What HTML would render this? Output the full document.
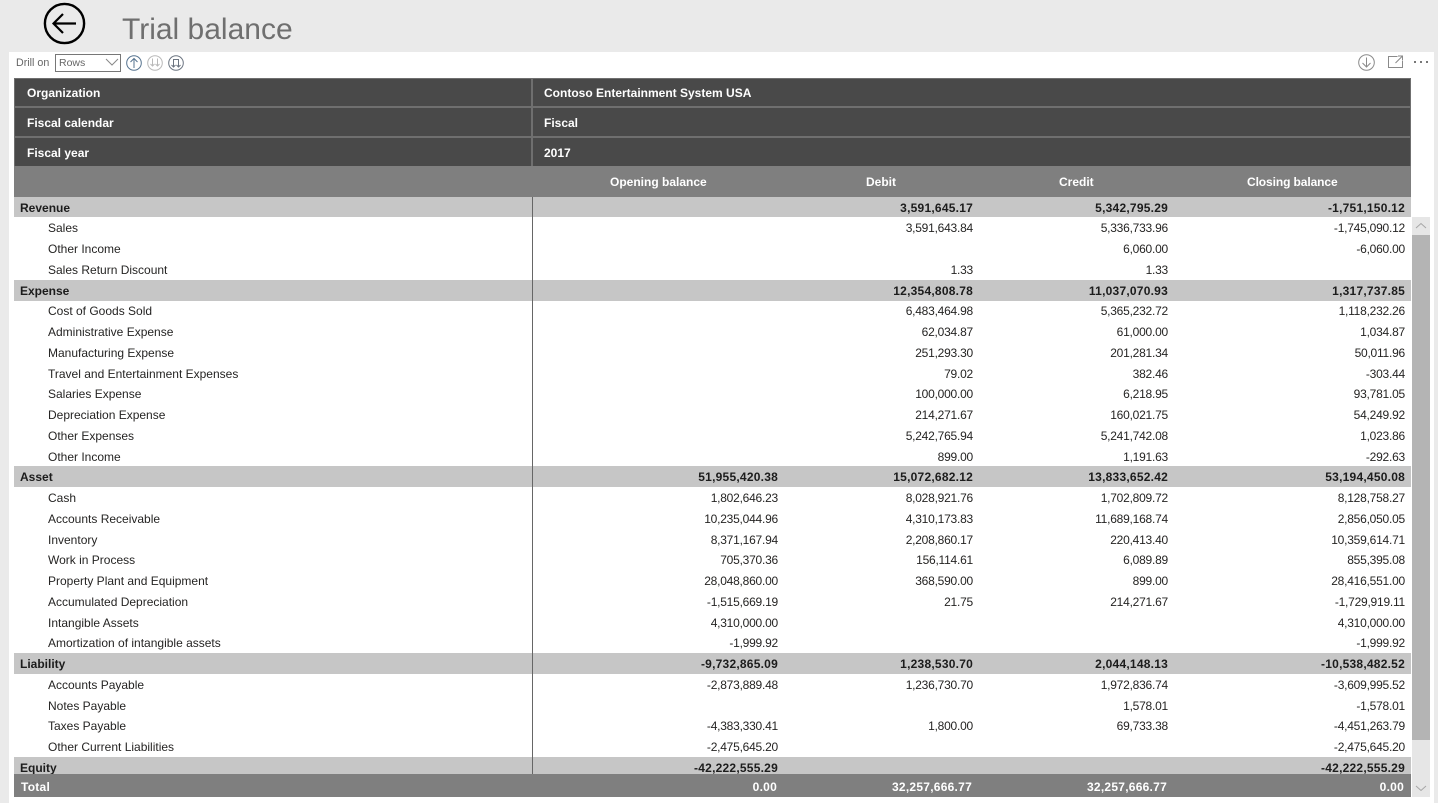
<!DOCTYPE html>
<html><head><meta charset="utf-8"><title>Trial balance</title>
<style>
html,body{margin:0;padding:0;width:1438px;height:803px;overflow:hidden;background:#eaeaea;font-family:"Liberation Sans",Arial,sans-serif}
div,span,svg{position:absolute;display:block}
.t{white-space:nowrap}
#panel{left:9px;top:52px;width:1425px;height:751px;background:#fff}
.h{left:14px;width:1395px;height:28px;background:#494949;border:0 solid #6f6f6f;border-width:2px 1px 0;color:#fff;font-weight:bold;font-size:12px;line-height:30px}
.h span{white-space:nowrap}
.r{left:14px;width:1397px;height:21px;font-size:12px;line-height:23px;color:#252423;overflow:hidden}
.g{background:#c6c6c6;font-weight:bold;color:#1c1c1c}
.r span{white-space:nowrap}
.l{left:34px}.g .l{left:6px}
.a{right:633px}.b{right:438px}.c{right:243px}.d{right:6px}
.r .a,.r .b,.r .c,.r .d{letter-spacing:-.23px}
.g .a,.g .b,.g .c,.g .d{letter-spacing:.23px}
.tot .a,.tot .b,.tot .c,.tot .d{letter-spacing:.25px;margin-right:1px}
</style></head><body>
<svg style="left:43px;top:2px" width="43" height="43" viewBox="0 0 43 43" fill="none" stroke="#000" stroke-width="2.4"><circle cx="21.5" cy="21.5" r="19.6"/><path d="M10.5 21.5H33M20 12l-9.5 9.5L20 31" stroke-width="2.2"/></svg>
<div class="t" style="left:122px;top:10px;font-size:30px;line-height:40px;color:#6f6f6f">Trial balance</div>
<div id="panel"></div>
<div class="t" style="left:16px;top:56px;font-size:10.7px;line-height:14px;color:#666">Drill on</div>
<div style="left:55px;top:54px;width:64px;height:16px;border:1px solid #777;background:#fff"></div>
<div class="t" style="left:59px;top:56px;font-size:10.5px;line-height:14px;color:#666">Rows</div>
<svg style="left:105px;top:58px" width="14" height="9" fill="none" stroke="#888"><path d="M1 1l6 6 6-6"/></svg>
<svg style="left:126px;top:55px" width="16" height="16" fill="none" stroke="#56738f" stroke-width="1"><circle cx="8" cy="8" r="7.3"/><path d="M8 13V3.5M4.5 7L8 3.5 11.500 7"/></svg>
<svg style="left:147px;top:55px" width="16" height="16" fill="none" stroke="#b9b9b9" stroke-width="1"><circle cx="8" cy="8" r="7.3"/><path d="M5.500 3.500V11M3.500 9l2 2 2-2M10.500 3.500V11M8.500 9l2 2 2-2"/></svg>
<svg style="left:168px;top:55px" width="16" height="16" fill="none" stroke="#6b7480" stroke-width="1"><circle cx="8" cy="8" r="7.3"/><path d="M5.500 12V4.500h5V12M3.500 10l2 2 2-2M8.500 10l2 2 2-2"/></svg>
<svg style="left:1358px;top:54px" width="17" height="17" fill="none" stroke="#8a8a8a" stroke-width="1"><circle cx="8.500" cy="8.500" r="7.800"/><path d="M8.500 3.500V13M4.500 9l4 4 4-4"/></svg>
<svg style="left:1388px;top:55px" width="16" height="14" fill="none" stroke="#8a8a8a" stroke-width="1"><path d="M9.500 1.500H.5v11h14V6M7.500 8L14 1.500M10 1h4.500v4.500"/></svg>
<svg style="left:1413px;top:60px" width="16" height="5" fill="#777"><rect x="1" y="1" width="2" height="2"/><rect x="7" y="1" width="2" height="2"/><rect x="13" y="1" width="2" height="2"/></svg>

<div class="h" style="top:78px;height:28px;border-top-width:1px;line-height:28px"><span style="left:12px">Organization</span><span style="left:529px">Contoso Entertainment System USA</span></div>
<div class="h" style="top:106px"><span style="left:12px">Fiscal calendar</span><span style="left:529px">Fiscal</span></div>
<div class="h" style="top:136px"><span style="left:12px">Fiscal year</span><span style="left:529px">2017</span></div>
<div style="left:531px;top:78px;width:2px;height:88px;background:#6f6f6f"></div>
<div style="left:14px;top:166px;width:1397px;height:31px;background:#7f7f7f;color:#fff;font-weight:bold;font-size:12px;line-height:33px"><span style="left:596px">Opening balance</span><span style="left:852px">Debit</span><span style="left:1045px">Credit</span><span style="left:1233px;letter-spacing:-.1px">Closing balance</span></div>

<div class="r g" style="top:197px;height:20px;line-height:22px"><span class="l">Revenue</span><span class="b">3,591,645.17</span><span class="c">5,342,795.29</span><span class="d">-1,751,150.12</span></div>
<div class="r" style="top:217.250px"><span class="l">Sales</span><span class="b">3,591,643.84</span><span class="c">5,336,733.96</span><span class="d">-1,745,090.12</span></div>
<div class="r" style="top:238px"><span class="l">Other Income</span><span class="c">6,060.00</span><span class="d">-6,060.00</span></div>
<div class="r" style="top:258.750px"><span class="l">Sales Return Discount</span><span class="b">1.33</span><span class="c">1.33</span></div>
<div class="r g" style="top:279.500px"><span class="l">Expense</span><span class="b">12,354,808.78</span><span class="c">11,037,070.93</span><span class="d">1,317,737.85</span></div>
<div class="r" style="top:300.250px"><span class="l">Cost of Goods Sold</span><span class="b">6,483,464.98</span><span class="c">5,365,232.72</span><span class="d">1,118,232.26</span></div>
<div class="r" style="top:321px"><span class="l">Administrative Expense</span><span class="b">62,034.87</span><span class="c">61,000.00</span><span class="d">1,034.87</span></div>
<div class="r" style="top:341.750px"><span class="l">Manufacturing Expense</span><span class="b">251,293.30</span><span class="c">201,281.34</span><span class="d">50,011.96</span></div>
<div class="r" style="top:362.500px"><span class="l">Travel and Entertainment Expenses</span><span class="b">79.02</span><span class="c">382.46</span><span class="d">-303.44</span></div>
<div class="r" style="top:383.250px"><span class="l">Salaries Expense</span><span class="b">100,000.00</span><span class="c">6,218.95</span><span class="d">93,781.05</span></div>
<div class="r" style="top:404px"><span class="l">Depreciation Expense</span><span class="b">214,271.67</span><span class="c">160,021.75</span><span class="d">54,249.92</span></div>
<div class="r" style="top:424.750px"><span class="l">Other Expenses</span><span class="b">5,242,765.94</span><span class="c">5,241,742.08</span><span class="d">1,023.86</span></div>
<div class="r" style="top:445.500px"><span class="l">Other Income</span><span class="b">899.00</span><span class="c">1,191.63</span><span class="d">-292.63</span></div>
<div class="r g" style="top:466.250px"><span class="l">Asset</span><span class="a">51,955,420.38</span><span class="b">15,072,682.12</span><span class="c">13,833,652.42</span><span class="d">53,194,450.08</span></div>
<div class="r" style="top:487px"><span class="l">Cash</span><span class="a">1,802,646.23</span><span class="b">8,028,921.76</span><span class="c">1,702,809.72</span><span class="d">8,128,758.27</span></div>
<div class="r" style="top:507.750px"><span class="l">Accounts Receivable</span><span class="a">10,235,044.96</span><span class="b">4,310,173.83</span><span class="c">11,689,168.74</span><span class="d">2,856,050.05</span></div>
<div class="r" style="top:528.500px"><span class="l">Inventory</span><span class="a">8,371,167.94</span><span class="b">2,208,860.17</span><span class="c">220,413.40</span><span class="d">10,359,614.71</span></div>
<div class="r" style="top:549.250px"><span class="l">Work in Process</span><span class="a">705,370.36</span><span class="b">156,114.61</span><span class="c">6,089.89</span><span class="d">855,395.08</span></div>
<div class="r" style="top:570px"><span class="l">Property Plant and Equipment</span><span class="a">28,048,860.00</span><span class="b">368,590.00</span><span class="c">899.00</span><span class="d">28,416,551.00</span></div>
<div class="r" style="top:590.750px"><span class="l">Accumulated Depreciation</span><span class="a">-1,515,669.19</span><span class="b">21.75</span><span class="c">214,271.67</span><span class="d">-1,729,919.11</span></div>
<div class="r" style="top:611.500px"><span class="l">Intangible Assets</span><span class="a">4,310,000.00</span><span class="d">4,310,000.00</span></div>
<div class="r" style="top:632.250px"><span class="l">Amortization of intangible assets</span><span class="a">-1,999.92</span><span class="d">-1,999.92</span></div>
<div class="r g" style="top:653px"><span class="l">Liability</span><span class="a">-9,732,865.09</span><span class="b">1,238,530.70</span><span class="c">2,044,148.13</span><span class="d">-10,538,482.52</span></div>
<div class="r" style="top:673.750px"><span class="l">Accounts Payable</span><span class="a">-2,873,889.48</span><span class="b">1,236,730.70</span><span class="c">1,972,836.74</span><span class="d">-3,609,995.52</span></div>
<div class="r" style="top:694.500px"><span class="l">Notes Payable</span><span class="c">1,578.01</span><span class="d">-1,578.01</span></div>
<div class="r" style="top:715.250px"><span class="l">Taxes Payable</span><span class="a">-4,383,330.41</span><span class="b">1,800.00</span><span class="c">69,733.38</span><span class="d">-4,451,263.79</span></div>
<div class="r" style="top:736px"><span class="l">Other Current Liabilities</span><span class="a">-2,475,645.20</span><span class="d">-2,475,645.20</span></div>
<div class="r g" style="top:757px;height:17px"><span class="l">Equity</span><span class="a">-42,222,555.29</span><span class="d">-42,222,555.29</span></div>
<div style="left:532px;top:197px;width:1px;height:577px;background:#666"></div>
<div class="r tot" style="top:774px;height:23px;background:#7f7f7f;color:#fff;font-weight:bold;line-height:26px"><span style="left:7px;letter-spacing:.25px">Total</span><span class="a">0.00</span><span class="b">32,257,666.77</span><span class="c">32,257,666.77</span><span class="d">0.00</span></div>

<div style="left:1412px;top:217px;width:18px;height:580px;background:#e6e6e6"></div>
<div style="left:1412px;top:235px;width:18px;height:505px;background:#b4b4b4"></div>
<svg style="left:1415px;top:222px" width="12" height="8" fill="none" stroke="#a6a6a6"><path d="M1 6l5-4.500 5 4.500"/></svg>
<svg style="left:1415px;top:784px" width="12" height="8" fill="none" stroke="#a6a6a6"><path d="M1 2l5 4.500 5-4.500"/></svg>
</body></html>
